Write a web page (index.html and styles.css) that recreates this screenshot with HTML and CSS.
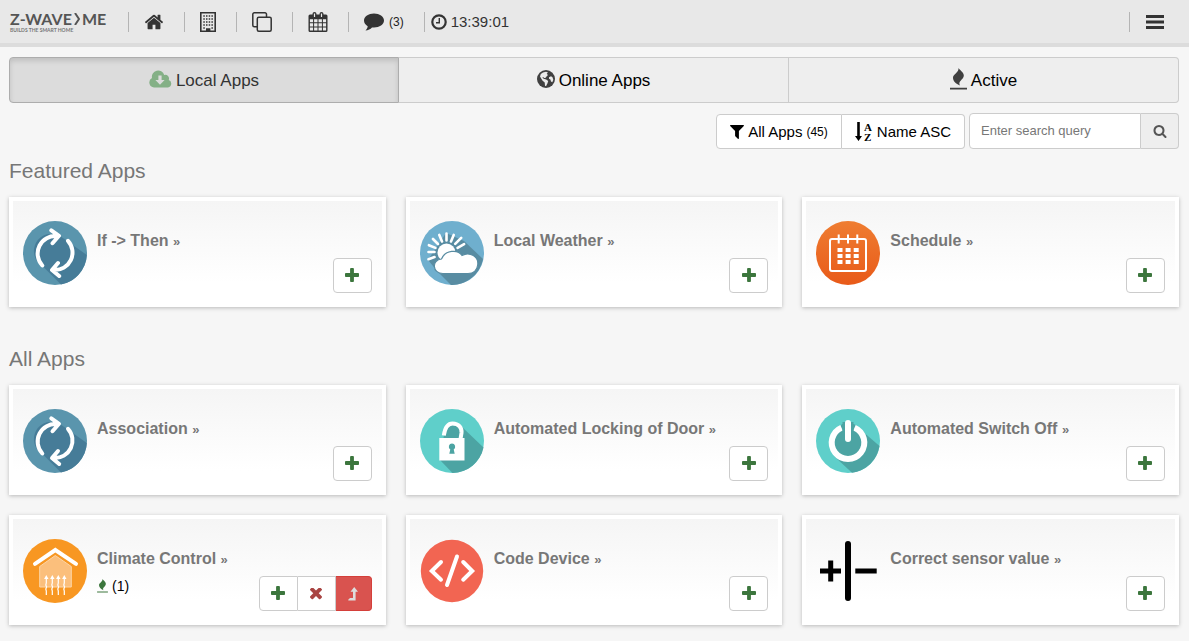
FILE: index.html
```html
<!DOCTYPE html>
<html lang="en">
<head>
<meta charset="utf-8">
<meta name="viewport" content="width=device-width, initial-scale=1">
<title>Z-Wave.Me Apps</title>
<link rel="stylesheet" href="styles.css">
</head>
<body>
<svg class="sprite" aria-hidden="true">
  <symbol id="i-home" viewBox="0 0 1792 1792"><path d="M1472 992v480q0 26-19 45t-45 19h-384v-384h-256v384h-384q-26 0-45-19t-19-45v-480q0-1 .5-3t.5-3l575-474 575 474q1 2 1 6zm223-69l-62 74q-8 9-21 11h-3q-13 0-21-7l-692-577-692 577q-12 8-24 7-13-2-21-11l-62-74q-8-10-7-23.500t11-21.500l719-599q32-26 76-26t76 26l244 204v-195q0-14 9-23t23-9h192q14 0 23 9t9 23v408l219 182q10 8 11 21.500t-7 23.500z"/></symbol>
  <symbol id="i-building" viewBox="0 0 16 20"><path fill="none" stroke="currentColor" stroke-width="1.600" d="M.8.8h14.400v18.400H.8z"/><path fill="none" stroke="currentColor" stroke-width="1.500" stroke-dasharray="1.500 1.200" d="M3.300 4h10M3.300 7h10M3.300 10h10M3.300 13h10"/><path d="M3.300 15.300h1.500v1.500H3.300zM11.400 15.300h1.500v1.500h-1.500zM6 16.200h4.400V20H6z"/></symbol>
  <symbol id="i-clone" viewBox="0 0 20 20"><g fill="none" stroke="currentColor" stroke-width="1.500"><rect x="5.300" y="5.200" width="13.900" height="14" rx="1.500"/><path d="M5 14.800H2.300A1.500 1.500 0 0 1 .8 13.300V2.300A1.500 1.500 0 0 1 2.300.8H13a1.500 1.500 0 0 1 1.500 1.500V5"/></g></symbol>
  <symbol id="i-calendar" viewBox="0 0 19 20"><path d="M1.500 2.500H4V2a2 2 0 0 1 4 0v.5h3V2a2 2 0 0 1 4 0v.5h2.500A1.500 1.500 0 0 1 19 4v14.500a1.500 1.500 0 0 1-1.500 1.500h-16A1.500 1.500 0 0 1 0 18.500V4a1.500 1.500 0 0 1 1.500-1.500z"/><path class="cut" d="M1.400 7.200h3.200v3H1.400zM5.600 7.200h3.400v3H5.600zM10 7.200h3.400v3H10zM14.400 7.200h3.200v3h-3.200zM1.400 11.200h3.200v3.200H1.400zM5.600 11.200h3.400v3.200H5.600zM10 11.200h3.400v3.200H10zM14.400 11.200h3.200v3.200h-3.200zM1.400 15.400h3.200v3.200H1.400zM5.600 15.400h3.400v3.200H5.600zM10 15.400h3.400v3.200H10zM14.400 15.400h3.200v3.200h-3.200zM5.400 1.500h1.200v3.500H5.400zM12.400 1.500h1.200v3.500h-1.200z"/></symbol>
  <symbol id="i-comment" viewBox="0 0 20 18"><path d="M10 .5c5.500 0 10 3.200 10 7s-4.500 7-10 7q-1 0-2-.1C6.500 16 4 17.300 1.500 17.500c1.300-1.200 2-2.500 2.200-4.300C1.400 11.900 0 9.800 0 7.500c0-3.800 4.500-7 10-7z"/></symbol>
  <symbol id="i-clock" viewBox="0 0 16 16"><g fill="none" stroke="currentColor"><circle cx="8" cy="8" r="6.700" stroke-width="2.200"/><path stroke-width="1.400" d="M8.300 4v4.800H5"/></g></symbol>
  <symbol id="i-bars" viewBox="0 0 18 14"><path d="M0 0h18v3H0zM0 5.500h18v3H0zM0 11h18v3H0z"/></symbol>
  <symbol id="i-cloud" viewBox="0 0 23 17"><path d="M5 17A5 5 0 0 1 3 7.600 6.300 6.300 0 0 1 15.200 4.500a3.700 3.700 0 0 1 4.500 5A3.900 3.900 0 0 1 19 17z"/><path fill="#dcdcdc" d="M9.400 5h3.200v4.500h3L11 14.300 6.400 9.500h3z"/></symbol>
  <symbol id="i-globe" viewBox="0 0 18 18"><circle cx="9" cy="9" r="9"/><path class="cut" d="M6 2.500 9 1.700l2 .9-1.300 1.200L11 5l-1.300 1.200-1 1.600-1.400.2L6 7 5.400 7.200l1.200 1.600 2.600.6 2 1.600-.7 2.300-1.500 2.900-1-.5-.3-3.100-2.300-2.200L3 6.500 3.800 4zM12 7.200l2-1 1.500 1 .8 2.500-1 2.500-1.300-.8-.6-1.800-1.400-.8z"/></symbol>
  <symbol id="i-fire" viewBox="0 0 17 22"><path d="M8.500 0c1 2 5 4 5.300 7.300.2 3-3 4.600-4.300 7.200-.4 1 .1 2 .4 3C6 16 2.800 13 3 9.500 3.200 6 9 4.500 8.500 0zM0 19.800h17v1.600H0z"/></symbol>
  <symbol id="i-filter" viewBox="192 256 1408 1408"><path d="M1595 295q17 41-14 70l-493 493v742q0 42-39 59-13 5-25 5-27 0-45-19l-256-256q-19-19-19-45v-486l-493-493q-31-29-14-70 17-39 59-39h1280q42 0 59 39z"/></symbol>
  <symbol id="i-search" viewBox="0 0 1792 1792"><path d="M1216 832q0-185-131.500-316.500t-316.500-131.500-316.500 131.500-131.500 316.500 131.500 316.500 316.500 131.500 316.500-131.500 131.500-316.500zm512 832q0 52-38 90t-90 38q-54 0-90-38l-343-342q-179 124-399 124-143 0-273.500-55.500t-225-150-150-225-55.500-273.500 55.500-273.500 150-225 225-150 273.500-55.500 273.500 55.500 225 150 150 225 55.500 273.500q0 220-124 399l343 343q37 37 37 90z"/></symbol>
  <symbol id="i-plus" viewBox="192 128 1408 1408"><path d="M1600 736v192q0 40-28 68t-68 28h-416v416q0 40-28 68t-68 28h-192q-40 0-68-28t-28-68v-416h-416q-40 0-68-28t-28-68v-192q0-40 28-68t68-28h416v-416q0-40 28-68t68-28h192q40 0 68 28t28 68v416h416q40 0 68 28t28 68z"/></symbol>
  <symbol id="i-times" viewBox="302 434 1188 1188"><path d="M1490 1322q0 40-28 68l-136 136q-28 28-68 28t-68-28l-294-294-294 294q-28 28-68 28t-68-28l-136-136q-28-28-28-68t28-68l294-294-294-294q-28-28-28-68t28-68l136-136q28-28 68-28t68 28l294 294 294-294q28-28 68-28t68 28l136 136q28 28 28 68t-28 68l-294 294 294 294q28 28 28 68z"/></symbol>
  <symbol id="i-levelup" viewBox="0 0 10 14"><path d="M6.200 0 10 4.800H7.600V13.600H.6L0 13 2 11H5V4.800H2.500z"/></symbol>
  <symbol id="a-sync" viewBox="0 0 64 64"><circle cx="32" cy="32" r="32" fill="#5a95ad"/><path fill="#467c98" d="M37 15 63.800 34A32 32 0 0 1 38 63.500L19.500 45A17 17 0 0 1 37 15z"/><g fill="none" stroke="#fff" stroke-width="4" stroke-linecap="round" stroke-linejoin="round"><path d="M19.300 44.500A17.500 17.500 0 0 1 34 15.200M28.300 9.300 36 14.800 29.500 22.200M45 19.800A17.500 17.500 0 0 1 31 49M35 42l-6 7 7.200 6"/></g></symbol>
  <symbol id="a-weather" viewBox="0 0 64 64"><circle cx="32" cy="32" r="32" fill="#6fafce"/><path fill="#588ca2" d="M26 12 44 20 63 38A32 32 0 0 1 31 64L18 51 8 39z"/><g transform="translate(26.500 31.500)"><circle r="9" fill="#fff"/><path fill="none" stroke="#fff" stroke-width="2.600" stroke-linecap="round" d="M0-12V-19M4.500-11l2.700-6.600M8.700-8.700l6-6M-4.500-11l-2.700-6.600M-8.500-8.500l-5-5M-11.100-4.600l-6.500-2.700M-12-.5h-6M-12 4.500l-6 2.200M11.100-4.600l6.500-3.700"/></g><path fill="#fff" stroke="#588ca2" stroke-width="1.200" d="M23 52.500C12 52.500 11.500 39 21.500 38 25 29 38 28 42 34.500 50 30 59 36 57.700 44 57 49.500 53 52.500 48 52.500z"/></symbol>
  <linearGradient id="orange" x2="0" y2="1"><stop stop-color="#ef7d31"/><stop offset="1" stop-color="#e85a19"/></linearGradient>
  <symbol id="a-schedule" viewBox="0 0 64 64"><circle cx="32" cy="32" r="32" fill="url(#orange)"/><g fill="none" stroke="#fff" stroke-width="2"><path d="M20 18h-4q-2 0-2 2v28q0 2 2 2h32q2 0 2-2V20q0-2-2-2h-4M20 18h24"/><path d="M22.700 13.500v9M32 13.500v9M41.300 13.500v9"/></g><path fill="#fff" d="M21.500 27h5v4h-5zM29.600 27h5v4h-5zM37.700 27h5v4h-5zM21.500 33h5v4h-5zM29.600 33h5v4h-5zM37.700 33h5v4h-5zM21.500 39h5v4h-5zM29.600 39h5v4h-5zM37.700 39h5v4h-5z"/></symbol>
  <symbol id="a-lock" viewBox="0 0 64 64"><circle cx="32" cy="32" r="32" fill="#5fcfca"/><path fill="#4ca4a3" d="M41 17 63.500 38.500A32 32 0 0 1 32.500 64L20 51 24 26 29 16z"/><path fill="none" stroke="#fff" stroke-width="4" d="M23.800 26.500C25 18.500 28 14.500 32.500 14.500 39 14.500 42 19 41.500 24Q41 27 40.500 30"/><path fill="#fff" d="M19.300 29h25.200v22.500H19.300z"/><path fill="#4ca4a3" d="M32 34.500a3.200 3.200 0 0 1 1.700 5.900l1 4.400h-5.400l1-4.400A3.200 3.200 0 0 1 32 34.500z"/></symbol>
  <symbol id="a-power" viewBox="0 0 64 64"><circle cx="32" cy="32" r="32" fill="#5fcfca"/><path fill="#4ca4a3" d="M26 15 38 15 63.500 37A32 32 0 0 1 36 63.700L19 48 16 30z"/><g fill="none" stroke="#fff" stroke-width="6"><path d="M25.500 18.700A16.300 16.300 0 1 0 38.500 18.700"/><path stroke="#4ca4a3" stroke-width="11" d="M32 13v13"/><path stroke-linecap="round" d="M32 14v16"/></g></symbol>
  <symbol id="a-climate" viewBox="0 0 64 64"><circle cx="32" cy="32" r="32" fill="#f89722"/><path fill="#fbbf7c" stroke="#fdd5a6" d="M16.700 27.500 32.300 16.500 48.300 27.500V48H16.700z"/><path fill="none" stroke="#fff" stroke-width="4" stroke-linecap="round" stroke-linejoin="miter" d="M12 24.800 32.300 11 53 24.800"/><g fill="none" stroke="#fff" stroke-width="1.200"><path d="M23.300 38v6l-.5 2 .8 2-.8 2 .5 2v4M29.300 38v6l-.5 2 .8 2-.8 2 .5 2v4M35.300 38v6l-.5 2 .8 2-.8 2 .5 2v4M41.300 38v6l-.5 2 .8 2-.8 2 .5 2v4"/></g><path fill="#fff" d="M23.300 36l2.200 4h-4.400zM29.300 36l2.200 4h-4.400zM35.300 36l2.200 4h-4.400zM41.300 36l2.200 4h-4.400z"/></symbol>
  <symbol id="a-code" viewBox="0 0 64 64"><circle cx="32" cy="32" r="31.200" fill="#f26552"/><g fill="none" stroke="#fff" stroke-width="4" stroke-linecap="round"><path d="M21 23 11.800 32 21 40.700M43.200 23 52.200 32 43.200 40.700M37 17.500 27 46"/></g></symbol>
  <symbol id="a-sensor" viewBox="0 0 64 64"><path fill="none" stroke="#000" stroke-width="6" stroke-linecap="round" d="M32 5v54"/><path d="M4 29.500h8.200v-8h5v8H25v5h-7.800v8h-5v-8H4zM39.300 29.500h21.400v5H39.300z"/></symbol>
</svg>

<header class="topbar">
  <a class="logo" href="#" aria-label="Z-Wave Me"><span class="logo-name">Z-WAVE<svg class="logo-mark" viewBox="0 0 6 12"><path d="M1 0 5 6 1 12"/></svg>ME</span><span class="logo-tag">BUILDS THE SMART HOME</span></a>
  <nav class="nav">
    <a class="nav-item" href="#" aria-label="Home"><svg class="i20"><use href="#i-home"/></svg></a>
    <a class="nav-item" href="#" aria-label="Rooms"><svg class="i16x20"><use href="#i-building"/></svg></a>
    <a class="nav-item" href="#" aria-label="Elements"><svg class="i20"><use href="#i-clone"/></svg></a>
    <a class="nav-item" href="#" aria-label="Events"><svg class="i20"><use href="#i-calendar"/></svg></a>
    <a class="nav-item" href="#" aria-label="Notifications"><svg class="i20"><use href="#i-comment"/></svg><span class="nav-count">(3)</span></a>
    <span class="nav-item clock"><svg class="i16"><use href="#i-clock"/></svg><time>13:39:01</time></span>
  </nav>
  <button class="menu" type="button" aria-label="Menu"><svg class="i18x14"><use href="#i-bars"/></svg></button>
</header>

<main class="page">
  <nav class="tabs">
    <a class="tab active" href="#"><svg class="i23"><use href="#i-cloud"/></svg>Local Apps</a>
    <a class="tab" href="#"><svg class="i18"><use href="#i-globe"/></svg>Online Apps</a>
    <a class="tab" href="#"><svg class="i17x22"><use href="#i-fire"/></svg>Active</a>
  </nav>

  <div class="toolbar">
    <div class="group">
      <button class="tool" type="button"><svg class="i14"><use href="#i-filter"/></svg>All Apps <small>(45)</small></button>
      <button class="tool" type="button"><svg class="i18" viewBox="0 0 18 20"><path d="M2.200 0h2.600v14H7l-3.500 5L0 14h2.200z"/><text class="az" x="9" y="9">A</text><text class="az" x="9" y="19">Z</text></svg>Name ASC</button>
    </div>
    <form class="search">
      <input type="text" placeholder="Enter search query" aria-label="Search query">
      <button type="button" aria-label="Search"><svg class="i14"><use href="#i-search"/></svg></button>
    </form>
  </div>

  <h2 class="heading">Featured Apps</h2>
  <section class="grid">
    <article class="card"><svg class="art"><use href="#a-sync"/></svg><div class="info"><h3><a href="#">If -&gt; Then <span>»</span></a></h3></div><div class="group actions"><button class="act add" type="button" aria-label="Add"><svg class="i14"><use href="#i-plus"/></svg></button></div></article>
    <article class="card"><svg class="art"><use href="#a-weather"/></svg><div class="info"><h3><a href="#">Local Weather <span>»</span></a></h3></div><div class="group actions"><button class="act add" type="button" aria-label="Add"><svg class="i14"><use href="#i-plus"/></svg></button></div></article>
    <article class="card"><svg class="art"><use href="#a-schedule"/></svg><div class="info"><h3><a href="#">Schedule <span>»</span></a></h3></div><div class="group actions"><button class="act add" type="button" aria-label="Add"><svg class="i14"><use href="#i-plus"/></svg></button></div></article>
  </section>

  <h2 class="heading all">All Apps</h2>
  <section class="grid">
    <article class="card"><svg class="art"><use href="#a-sync"/></svg><div class="info"><h3><a href="#">Association <span>»</span></a></h3></div><div class="group actions"><button class="act add" type="button" aria-label="Add"><svg class="i14"><use href="#i-plus"/></svg></button></div></article>
    <article class="card"><svg class="art"><use href="#a-lock"/></svg><div class="info"><h3><a href="#">Automated Locking of Door <span>»</span></a></h3></div><div class="group actions"><button class="act add" type="button" aria-label="Add"><svg class="i14"><use href="#i-plus"/></svg></button></div></article>
    <article class="card"><svg class="art"><use href="#a-power"/></svg><div class="info"><h3><a href="#">Automated Switch Off <span>»</span></a></h3></div><div class="group actions"><button class="act add" type="button" aria-label="Add"><svg class="i14"><use href="#i-plus"/></svg></button></div></article>
    <article class="card"><svg class="art"><use href="#a-climate"/></svg><div class="info"><h3><a href="#">Climate Control <span>»</span></a></h3><p class="running"><svg class="i11x14"><use href="#i-fire"/></svg>(1)</p></div><div class="group actions"><button class="act add" type="button" aria-label="Add"><svg class="i14"><use href="#i-plus"/></svg></button><button class="act remove" type="button" aria-label="Remove"><svg class="i12"><use href="#i-times"/></svg></button><button class="act reset" type="button" aria-label="Update"><svg class="i10x14"><use href="#i-levelup"/></svg></button></div></article>
    <article class="card"><svg class="art"><use href="#a-code"/></svg><div class="info"><h3><a href="#">Code Device <span>»</span></a></h3></div><div class="group actions"><button class="act add" type="button" aria-label="Add"><svg class="i14"><use href="#i-plus"/></svg></button></div></article>
    <article class="card"><svg class="art"><use href="#a-sensor"/></svg><div class="info"><h3><a href="#">Correct sensor value <span>»</span></a></h3></div><div class="group actions"><button class="act add" type="button" aria-label="Add"><svg class="i14"><use href="#i-plus"/></svg></button></div></article>
  </section>
</main>
</body>
</html>
```

FILE: styles.css
```css
* { box-sizing: border-box; }
body {
  margin: 0;
  background: #f6f6f6;
  color: #000;
  font: 15px/20px "Liberation Sans", Arial, sans-serif;
}
a { color: inherit; text-decoration: none; }
button, input { font: inherit; color: inherit; margin: 0; }
button { cursor: pointer; }
svg { display: block; flex: none; fill: currentColor; }
.sprite { position: absolute; width: 0; height: 0; }
.cut { fill: #ebebeb; }

.i10x14 { width: 10px; height: 14px; }
.i11x14 { width: 11px; height: 14px; }
.i12 { width: 12px; height: 12px; }
.i14 { width: 14px; height: 14px; }
.i16 { width: 16px; height: 16px; }
.i16x20 { width: 16px; height: 20px; }
.i17x22 { width: 17px; height: 22px; }
.i18 { width: 18px; height: 20px; }
.i18x14 { width: 18px; height: 14px; }
.i20 { width: 20px; height: 20px; }
.i23 { width: 23px; height: 18px; }

.topbar {
  display: flex;
  align-items: center;
  height: 47px;
  padding: 0 25px 0 10px;
  background: #e8e8e8;
  border-bottom: 4px solid #dcdcdc;
  color: #333;
}
.logo { width: 118px; color: #555; }
.logo-name {
  display: flex;
  align-items: center;
  gap: 2px;
  font: bold 16px/16px Lato, sans-serif;
}
.logo-mark { width: 6px; height: 12px; fill: none; stroke: #555; stroke-width: 2; }
.logo-tag { display: block; font: bold 5px/6px Lato, sans-serif; color: #777; }
.nav { display: flex; flex: 1; }
.nav-item {
  display: flex;
  align-items: center;
  height: 20px;
  padding: 0 20px 0 15px;
  border-left: 1px solid #b4b4b4;
}
.nav-count { margin-left: 5px; font-size: 12px; color: #222; }
.clock { padding: 0 0 0 6px; gap: 4px; }
.menu {
  height: 20px;
  padding: 0 0 0 16px;
  border: 0;
  border-left: 1px solid #b4b4b4;
  background: none;
}

.page { padding: 10px 10px 15px 9px; }
.tabs {
  display: grid;
  grid-template-columns: repeat(3, 1fr);
  height: 46px;
  font-size: 17px;
}
.tab {
  display: flex;
  align-items: center;
  justify-content: center;
  gap: 4px;
  padding-top: 1px;
  background: #eee;
  border: 1px solid #ccc;
  border-left-width: 0;
}
.tab svg { color: #404040; margin-bottom: 4px; }
.tab:last-child { border-radius: 0 4px 4px 0; }
.tab.active {
  background: #dcdcdc;
  border: 1px solid #adadad;
  border-radius: 4px 0 0 4px;
  box-shadow: inset 0 3px 5px rgba(0, 0, 0, .125);
  color: #333;
}
.tab.active svg { color: #84b086; }

.toolbar {
  display: flex;
  justify-content: flex-end;
  gap: 4px;
  margin-top: 10px;
}
.group { display: flex; }
.tool, .act {
  display: flex;
  align-items: center;
  justify-content: center;
  background: #fff;
  border: 1px solid #ccc;
}
.group button + button { border-left-width: 0; }
.group button:first-child { border-radius: 4px 0 0 4px; }
.group button:last-child { border-radius: 0 4px 4px 0; }
.group button:only-child { border-radius: 4px; }
.tool { height: 35px; margin-top: 1px; padding: 0 13px; gap: 4px; }
.tool small { font-size: 12px; }
.az { font: bold 11px "Liberation Serif", serif; }
.search { display: flex; width: 210px; height: 36px; }
.search input {
  flex: 1;
  min-width: 0;
  padding: 0 11px;
  border: 1px solid #ccc;
  border-radius: 4px 0 0 4px;
  background: #fff;
  font-size: 13px;
}
.search input::placeholder { color: #777; opacity: 1; }
.search button {
  display: flex;
  align-items: center;
  justify-content: center;
  width: 38px;
  padding: 0;
  border: 1px solid #ccc;
  border-left: 0;
  border-radius: 0 4px 4px 0;
  background: #eee;
  color: #555;
}

.heading {
  margin: 10px 0 14px;
  font-size: 21px;
  line-height: 24px;
  font-weight: normal;
  color: #777;
}
.heading.all { margin-top: 40px; }
.grid {
  display: grid;
  grid-template-columns: repeat(3, 1fr);
  gap: 20px;
}
.card {
  display: flex;
  min-height: 110px;
  padding: 20px 10px 10px;
  border: 4px solid #fff;
  background: linear-gradient(#f5f5f5, #fff 80%);
  box-shadow: 0 1px 4px rgba(0, 0, 0, .25);
}
.art { width: 64px; height: 64px; }
.info { flex: 1; min-width: 0; padding: 8px 0 0 10px; }
.info h3 { margin: 0; font-size: 16px; line-height: 24px; color: #777; white-space: nowrap; }
.info h3 span { font-size: 13px; }
.actions { align-self: flex-end; }
.act { width: 39px; height: 35px; padding: 0; }
.add { color: #3c763d; padding-bottom: 2px; }
.remove { color: #a94442; width: 38px; }
.reset { width: 36px; background: #d9534f; border-color: #d43f3a; color: #ddd; }
.running {
  display: flex;
  align-items: center;
  gap: 4px;
  margin: 2px 0 0;
  font-size: 14px;
  line-height: 24px;
}
.running svg { color: #3c763d; }
```
